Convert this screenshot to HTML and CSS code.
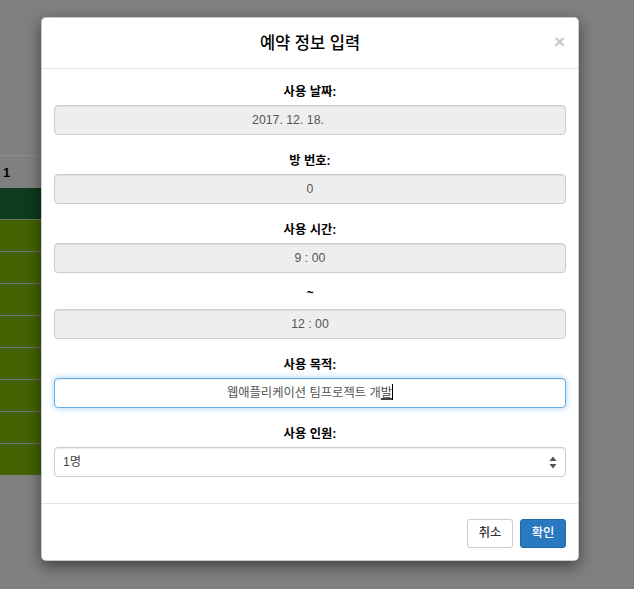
FILE: index.html
```html
<!DOCTYPE html>
<html lang="ko">
<head>
<meta charset="utf-8">
<title>예약 정보 입력</title>
<link rel="stylesheet" href="styles.css">
</head>
<body>
<div class="page">
  <table class="sched">
    <tr class="head"><th>1</th><th></th></tr>
    <tr class="dark"><td></td><td></td></tr>
    <tr class="olive"><td></td><td></td></tr>
    <tr class="olive"><td></td><td></td></tr>
    <tr class="olive"><td></td><td></td></tr>
    <tr class="olive"><td></td><td></td></tr>
    <tr class="olive"><td></td><td></td></tr>
    <tr class="olive"><td></td><td></td></tr>
    <tr class="olive"><td></td><td></td></tr>
    <tr class="olive"><td></td><td></td></tr>
  </table>
</div>

<div class="modal">
  <div class="modal-header">
    <h4 class="modal-title">예약 정보 입력</h4>
    <span class="close">×</span>
  </div>
  <div class="modal-body">
    <div class="group">
      <label class="lbl">사용 날짜:</label>
      <div class="field disabled date">2017. 12. 18.</div>
    </div>
    <div class="group">
      <label class="lbl">방 번호:</label>
      <div class="field disabled">0</div>
    </div>
    <div class="group">
      <label class="lbl">사용 시간:</label>
      <div class="field disabled">9 : 00</div>
    </div>
    <div class="group">
      <label class="lbl lbl-short">~</label>
      <div class="field disabled">12 : 00</div>
    </div>
    <div class="group">
      <label class="lbl">사용 목적:</label>
      <div class="field focus">웹애플리케이션 팀프로젝트 개<span class="compose">발</span><span class="caret"></span></div>
    </div>
    <div class="group last">
      <label class="lbl">사용 인원:</label>
      <div class="field select"><span>1명</span>
        <svg class="arrows" width="8" height="13" viewBox="0 0 8 13"><path d="M4 0.5 L7.5 5 L0.5 5 Z M4 12.5 L7.5 8 L0.5 8 Z" fill="#555"/></svg>
      </div>
    </div>
  </div>
  <div class="modal-footer">
    <button class="btn btn-default">취소</button>
    <button class="btn btn-primary">확인</button>
  </div>
</div>
</body>
</html>
```

FILE: styles.css
```css
html, body {
  margin: 0;
  padding: 0;
}
body {
  background: #808080;
  font-family: "Liberation Sans", "Noto Sans CJK KR", sans-serif;
  width: 634px;
  height: 589px;
  overflow: hidden;
}
.page {
  padding-top: 155px;
}
.sched {
  border-collapse: collapse;
  width: 560px;
}
.sched th, .sched td {
  padding: 0;
}
.sched .head th {
  height: 32px;
  border-top: 1px solid #8c8c8c;
  text-align: left;
  padding-left: 3px;
  font-size: 13px;
  font-weight: bold;
  color: #000;
  width: 40px;
}
.sched .dark td {
  height: 31px;
  background: #0e3a1d;
}
.sched .olive td {
  height: 31px;
  background: #436300;
  border-top: 1px solid #717171;
}

.modal {
  position: absolute;
  top: 17px;
  left: 41px;
  width: 536px;
  background: #fff;
  border: 1px solid rgba(0, 0, 0, 0.2);
  border-radius: 5px;
  box-shadow: 0 5px 15px rgba(0, 0, 0, 0.5);
}
.modal-header {
  position: relative;
  border-bottom: 1px solid #e5e5e5;
  display: flex;
  align-items: center;
  justify-content: center;
  box-sizing: border-box;
  height: 51px;
}
.modal-title {
  margin: 0;
  font-size: 16.5px;
  font-weight: 500;
  color: #000;
  line-height: 22px;
}
.close {
  position: absolute;
  right: 13px;
  top: 12px;
  font-size: 19px;
  font-weight: bold;
  color: #c9c9c9;
  line-height: 24px;
}
.modal-body {
  padding: 13px 12px 13px;
}
.group {
  margin-bottom: 16px;
}
.group.last {
  margin-bottom: 13px;
}
.lbl {
  display: block;
  text-align: center;
  font-size: 12.3px;
  font-weight: bold;
  line-height: 20px;
  height: 20px;
  margin-bottom: 3px;
  color: #000;
}
.lbl-short {
  height: 17px;
  line-height: 9px;
}
.field {
  box-sizing: border-box;
  height: 30px;
  border: 1px solid #ccc;
  border-radius: 4px;
  font-size: 12.3px;
  line-height: 28px;
  color: #555;
  text-align: center;
  background: #fff;
  box-shadow: inset 0 1px 1px rgba(0, 0, 0, 0.075);
}
.field.disabled {
  background: #eee;
}
.field.date {
  padding-right: 44px;
}
.field.focus {
  border-color: #66afe9;
  box-shadow: inset 0 1px 1px rgba(0, 0, 0, 0.075), 0 0 6px rgba(102, 175, 233, 0.6);
  color: #555;
}
.compose {
  text-decoration: underline;
  text-decoration-thickness: 2px;
  text-underline-offset: 1px;
  color: #444;
}
.caret {
  display: inline-block;
  width: 1px;
  height: 16px;
  background: #000;
  vertical-align: -3px;
}
.field.select {
  display: flex;
  align-items: center;
  justify-content: space-between;
  padding: 0 8px 0 8px;
  text-align: left;
  color: #444;
}
.arrows {
  display: block;
}
.modal-footer {
  border-top: 1px solid #e5e5e5;
  padding: 15px 12px 12px;
  display: flex;
  justify-content: flex-end;
  gap: 7px;
}
.btn {
  box-sizing: border-box;
  height: 29px;
  width: 46px;
  padding: 0;
  border-radius: 3px;
  font-family: "Liberation Sans", "Noto Sans CJK KR", sans-serif;
  font-size: 12.3px;
  font-weight: 500;
  line-height: 27px;
  cursor: pointer;
}
.btn-default {
  background: #fff;
  border: 1px solid #ccc;
  color: #333;
}
.btn-primary {
  background: #2a78bf;
  border: 1px solid #2468a8;
  color: #fff;
}
```
